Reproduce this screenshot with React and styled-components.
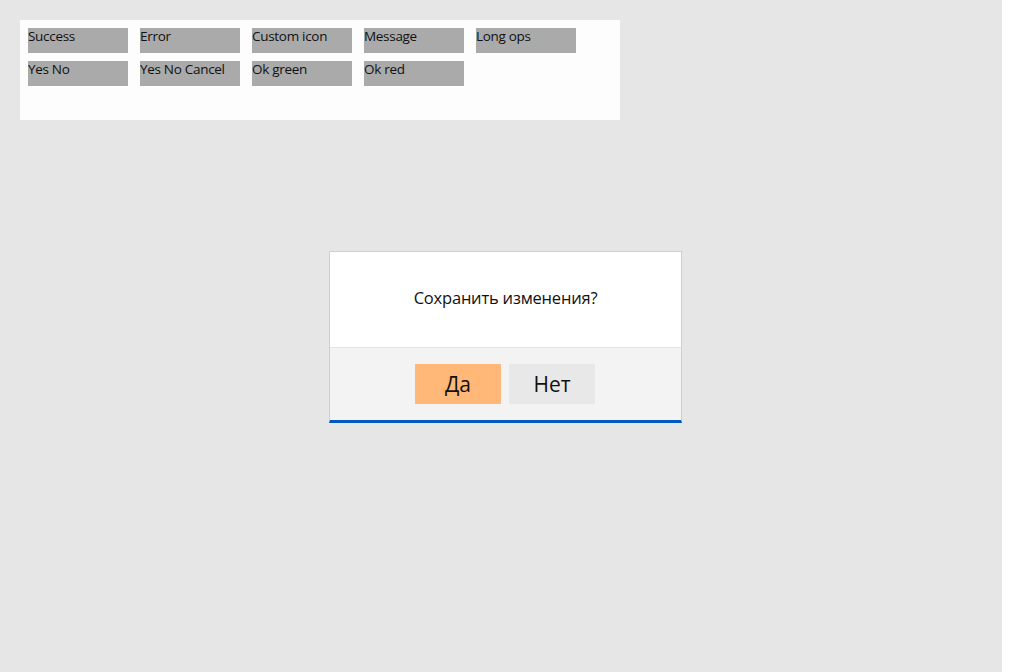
import React from 'react';
import styled, { createGlobalStyle } from 'styled-components';

const GlobalStyle = createGlobalStyle`
  html, body {
    margin: 0;
    padding: 0;
    background: #ffffff;
  }
  body {
    font-family: "Open Sans", "DejaVu Sans", sans-serif;
  }
`;

const Page = styled.div`
  width: 1002px;
  min-height: 672px;
  background: #e6e6e6;
  padding: 20px;
  box-sizing: border-box;
`;

const Panel = styled.div`
  width: 600px;
  height: 100px;
  background: #fdfdfd;
  padding: 8px;
  box-sizing: border-box;
  display: grid;
  grid-template-columns: repeat(5, 100px);
  grid-auto-rows: 25px;
  column-gap: 12px;
  row-gap: 8px;
`;

const DemoButton = styled.button`
  all: unset;
  box-sizing: border-box;
  height: 25px;
  padding-bottom: 8px;
  background: #aaaaaa;
  color: #111;
  font-family: "Open Sans", sans-serif;
  font-size: 13.5px;
  letter-spacing: -0.3px;
  line-height: 17px;
  cursor: pointer;
  white-space: nowrap;
  overflow: hidden;
`;

const Overlay = styled.div`
  position: fixed;
  inset: 0;
  padding: 2px 0 0 1px;
  display: flex;
  align-items: center;
  justify-content: center;
  pointer-events: none;
`;

const Dialog = styled.div`
  width: 351px;
  background: #ffffff;
  border: 1px solid #cfcfcf;
  border-bottom: 3px solid #0059c1;
  pointer-events: auto;
`;

const Body = styled.div`
  height: 95px;
  padding-bottom: 4px;
  box-sizing: border-box;
  display: flex;
  align-items: center;
  justify-content: center;
  font-family: "Open Sans", sans-serif;
  font-size: 16.5px;
  color: #111;
  letter-spacing: -0.2px;
`;

const Footer = styled.div`
  height: 72px;
  padding-right: 1px;
  background: #f3f3f3;
  border-top: 1px solid #e4e4e4;
  display: flex;
  justify-content: center;
  align-items: center;
  gap: 8px;
`;

const DialogButton = styled.button`
  all: unset;
  width: 86px;
  height: 40px;
  text-align: center;
  line-height: 40px;
  font-family: "Open Sans", sans-serif;
  font-size: 21px;
  color: #111;
  background: ${p => (p.$primary ? '#ffb877' : '#e8e8e8')};
  cursor: pointer;
`;

const buttons = [
  'Success', 'Error', 'Custom icon', 'Message', 'Long ops',
  'Yes No', 'Yes No Cancel', 'Ok green', 'Ok red',
];

export default function App() {
  return (
    <>
      <GlobalStyle />
      <Page>
        <Panel>
          {buttons.map(b => (
            <DemoButton key={b}>{b}</DemoButton>
          ))}
        </Panel>
      </Page>
      <Overlay>
        <Dialog>
          <Body>Сохранить изменения?</Body>
          <Footer>
            <DialogButton $primary>Да</DialogButton>
            <DialogButton>Нет</DialogButton>
          </Footer>
        </Dialog>
      </Overlay>
    </>
  );
}
